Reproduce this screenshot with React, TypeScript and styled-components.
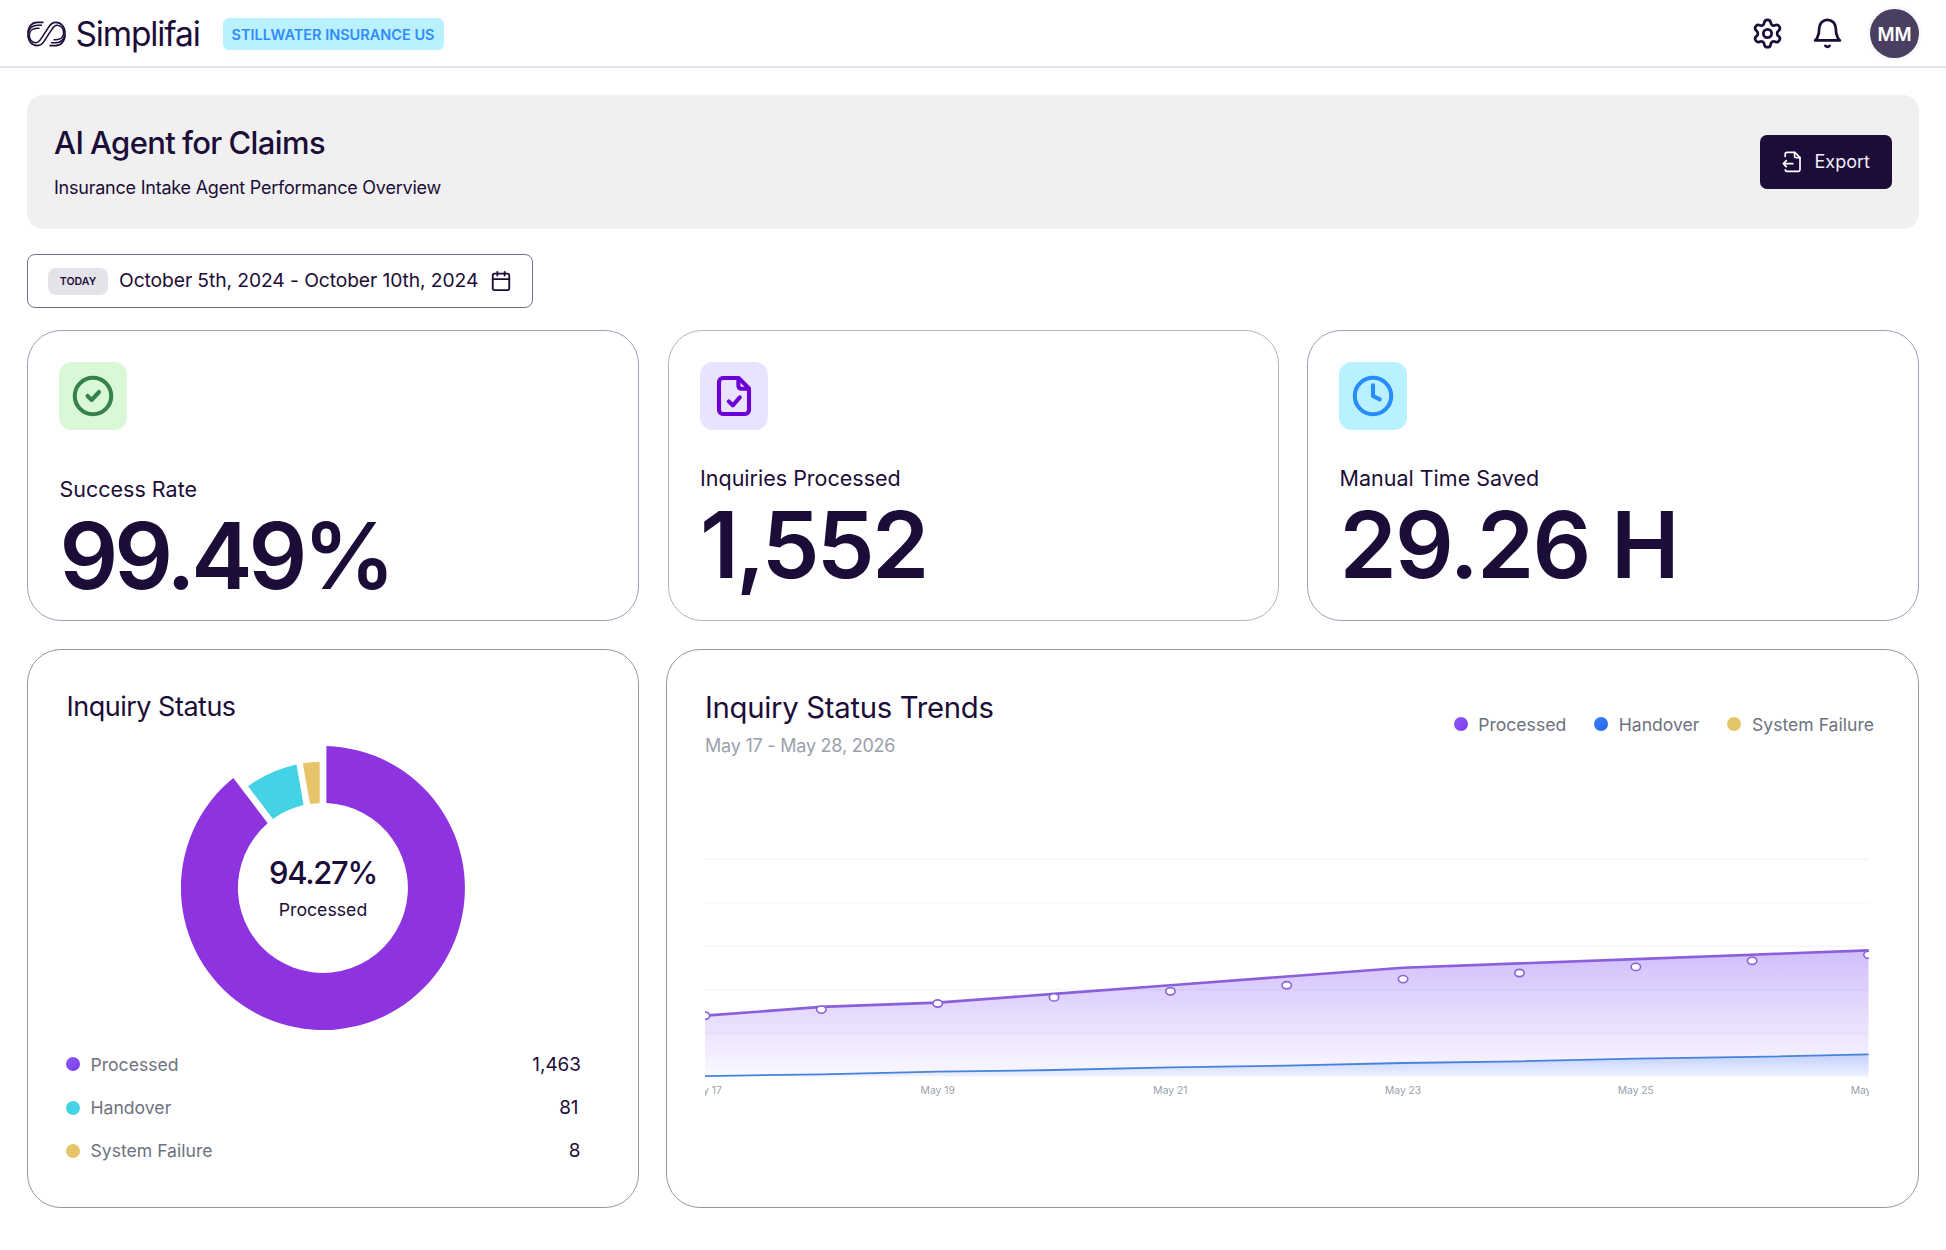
import React from "react";
import styled, { createGlobalStyle } from "styled-components";
import { Calendar, Settings } from "lucide-react";

const ink = "#1c0d38";

const GlobalStyle = createGlobalStyle`
  * { box-sizing: border-box; }
  body {
    margin: 0;
    background: #fff;
    color: ${ink};
    font-family: Inter, "Liberation Sans", sans-serif;
  }
  svg { display: block; flex: none; }
`;

const Page = styled.div`
  width: 1946px;
  height: 1250px;
  overflow: hidden;
`;

const Header = styled.header`
  height: 68px;
  border-bottom: 2px solid #e3e1ec;
  padding: 1px 27px 0;
  display: flex;
  align-items: center;
`;

const Wordmark = styled.span`
  margin-left: 9.5px;
  width: 127px;
  font-size: 33.5px;
  line-height: 40px;
  font-weight: 400;
  letter-spacing: -1.15px;
  white-space: nowrap;
`;

const Tenant = styled.span`
  margin-left: 20px;
  width: 221px;
  height: 32px;
  border-radius: 6px;
  background: #b9f1ff;
  color: #2f8cf8;
  font-size: 14.5px;
  line-height: 33px;
  font-weight: 600;
  text-align: center;
  white-space: nowrap;
`;

const HeaderActions = styled.div`
  margin-left: auto;
  display: flex;
  align-items: center;
  gap: 26.5px;
`;

const Avatar = styled.div`
  width: 49px;
  height: 49px;
  border-radius: 50%;
  background: #4a3f60;
  box-shadow: 0 0 0 3px #f9f8fb;
  color: #fff;
  font-size: 18.5px;
  line-height: 50px;
  font-weight: 600;
  text-align: center;
`;

const Main = styled.main`
  padding: 27px 27px 0;
`;

const Hero = styled.section`
  height: 134px;
  padding: 0 27px;
  border-radius: 16px;
  background: #f0f0f0;
  display: flex;
  align-items: center;
  justify-content: space-between;
`;

const Title = styled.h1`
  margin: 0;
  font-size: 31px;
  line-height: 40px;
  font-weight: 500;
  letter-spacing: -0.6px;
  word-spacing: -1px;
`;

const Subtitle = styled.p`
  margin: 12px 0 0;
  font-size: 18px;
  line-height: 26px;
  letter-spacing: -0.23px;
`;

const ExportButton = styled.button`
  width: 132px;
  height: 54px;
  padding: 0 0 0 22px;
  border: 0;
  border-radius: 7px;
  background: ${ink};
  color: #f0eef5;
  display: flex;
  align-items: center;
  gap: 12.5px;
  font: 400 18px/24px Inter, sans-serif;
`;

const DateRange = styled.div`
  margin-top: 25px;
  width: 506px;
  height: 54px;
  padding-left: 20px;
  border: 1px solid #77728a;
  border-radius: 8px;
  display: flex;
  align-items: center;
`;

const Today = styled.span`
  width: 60px;
  height: 27px;
  border-radius: 8px;
  background: #e5e3ea;
  font-size: 10.6px;
  line-height: 27px;
  font-weight: 600;
  text-align: center;
`;

const DateText = styled.span`
  margin: 0 0 0 11px;
  padding-bottom: 1.5px;
  width: 371px;
  font-size: 19.3px;
  line-height: 26px;
  letter-spacing: -0.1px;
  white-space: nowrap;
`;

const StatGrid = styled.section`
  margin-top: 22px;
  display: grid;
  grid-template-columns: 612px 611px 612px;
  justify-content: space-between;
`;

const Card = styled.article<{ $line: string }>`
  border: 1px solid ${(p) => p.$line};
  border-radius: 34px;
`;

const StatCard = styled(Card)`
  height: 291px;
  padding: 31px 31px 0;
`;

const Tile = styled.div<{ $bg: string }>`
  width: 68px;
  height: 68px;
  border-radius: 13px;
  background: ${(p) => p.$bg};
  display: flex;
  align-items: center;
  justify-content: center;
`;

const StatLabel = styled.div<{ $gap: number }>`
  margin-top: ${(p) => p.$gap}px;
  padding-left: 0.5px;
  font-size: 21.5px;
  line-height: 28px;
`;

const StatValue = styled.div<{ $track: number }>`
  margin-top: 7.5px;
  padding-left: 0.5px;
  font-size: 92px;
  line-height: 92px;
  font-weight: 600;
  letter-spacing: ${(p) => p.$track}px;
  white-space: nowrap;
`;

const ChartGrid = styled.section`
  margin-top: 28px;
  display: grid;
  grid-template-columns: 612px 1253px;
  justify-content: space-between;
`;

const StatusCard = styled(Card)`
  height: 559px;
  padding: 39px 57px 0 38.5px;
`;

const StatusTitle = styled.h2`
  margin: 0;
  font-size: 27px;
  line-height: 36px;
  font-weight: 400;
  letter-spacing: -0.5px;
`;

const DonutArea = styled.div`
  display: grid;
  width: 284px;
  height: 284px;
  margin: 21px 0 0 114.5px;
  place-items: center;
  > * { grid-area: 1 / 1; }
`;

const DonutCaption = styled.div`
  text-align: center;
  margin-top: 1px;
`;

const DonutValue = styled.div`
  font-size: 31px;
  line-height: 36px;
  font-weight: 500;
  letter-spacing: -1.3px;
`;

const DonutLabel = styled.div`
  font-size: 17.7px;
  line-height: 24px;
  margin-top: 7px;
`;

const LegendRow = styled.div`
  display: flex;
  align-items: center;
  height: 43.2px;
`;

const StatusLegend = styled.div`
  margin: 13.5px 0 0 -1px;
`;

const Dot = styled.span<{ $fill: string }>`
  width: 14px;
  height: 14px;
  margin-bottom: 1.5px;
  border-radius: 50%;
  background: ${(p) => p.$fill};
`;

const LegendName = styled.span<{ $gap: number }>`
  margin-left: ${(p) => p.$gap}px;
  color: #6e7280;
  font-size: 17.6px;
  line-height: 24px;
  white-space: nowrap;
`;

const LegendValue = styled.span<{ $inset: number }>`
  margin-left: auto;
  padding-right: ${(p) => p.$inset}px;
  font-size: 18.9px;
  line-height: 24px;
`;

const TrendCard = styled(Card)`
  height: 559px;
  padding: 38px 44px 0 38px;
`;

const TrendHeader = styled.div`
  display: flex;
  justify-content: space-between;
`;

const TrendTitle = styled.h2`
  margin: 0;
  font-size: 29.3px;
  line-height: 40px;
  font-weight: 400;
  letter-spacing: -0.3px;
`;

const TrendDates = styled.p`
  margin: 5.5px 0 0;
  color: #9ca0ab;
  font-size: 18px;
  line-height: 24px;
  letter-spacing: -0.22px;
`;

const TrendLegend = styled.div`
  display: flex;
  height: 24px;
  margin-top: 25px;
  gap: 28px;
`;

const TrendKey = styled.div`
  display: flex;
  align-items: center;
`;

const TrendPlot = styled.div`
  margin-top: 91.5px;
`;

const violetDot = "linear-gradient(135deg, #8b5cf6, #7c3aed)";

function LogoStrand() {
  return (
    <>
      <path d="M16.500 1.400H10.300C4.700 1.400.900 6 .900 13S4.700 24.600 10.300 24.600c3.200 0 5-1.600 6.700-4.200L24.700 8.600C26.400 6 27.500 4.300 30 4.300c4.300 0 6.700 3.500 6.700 7.500 0 4.500-3.400 7-8 7H26.500" />
      <path d="M15 4.200H10.500C6 4.200 2.400 7 1.200 11.500" />
    </>
  );
}

function Logo() {
  return (
    <svg width="39" height="26" viewBox="0 0 39 26" fill="none" stroke={ink} strokeWidth="1.600">
      <LogoStrand />
      <g transform="rotate(180 19.500 13)">
        <LogoStrand />
      </g>
    </svg>
  );
}

function BellIcon() {
  return (
    <svg width="33" height="33" viewBox="0 0 24 24" fill="none" stroke={ink} strokeWidth="2" strokeLinecap="round" strokeLinejoin="round">
      <path d="M18 8A6 6 0 0 0 6 8c0 7-3 9-3 9h18s-3-2-3-9" />
      <path d="M13.500 21a2 2 0 0 1-3 0" />
    </svg>
  );
}

function ExportIcon() {
  return (
    <svg width="20" height="22" viewBox="0 0 20 22" fill="none" stroke="#fff" strokeWidth="1.700" strokeLinecap="round" strokeLinejoin="round">
      <path d="M3.200 5.500V3.200a1.800 1.800 0 0 1 1.800-1.800h7.800L18 6.600v12a1.800 1.800 0 0 1-1.800 1.800H5a1.800 1.800 0 0 1-1.800-1.500" />
      <path d="M12.600 1.600v3.600a1.500 1.500 0 0 0 1.500 1.500H18" />
      <path d="M10.800 12.700H1.500M4.300 9.700l-3 3 3 3" />
    </svg>
  );
}

type GlyphProps = { color: string; paths: string[]; ring?: boolean };

function TileGlyph({ color, paths, ring }: GlyphProps) {
  return (
    <svg width="48" height="48" viewBox="0 0 24 24" fill="none" stroke={color} strokeWidth="2.050" strokeLinecap="round" strokeLinejoin="round">
      {ring && <circle cx="12" cy="12" r="9.100" />}
      {paths.map((d) => <path key={d} d={d} />)}
    </svg>
  );
}

const stats = [
  {
    label: "Success Rate", value: "99.49%", gap: 44.5, track: -4.2, line: "#a59dbb", tile: "#daf8d8",
    glyph: { color: "#35834a", ring: true, paths: ["M9.300 12l2 2 3.700-4"] },
  },
  {
    label: "Inquiries Processed", value: "1,552", gap: 33.8, track: -2.8, line: "#b4b3bc", tile: "#e9e3ff",
    glyph: {
      color: "#6c00d4",
      paths: [
        "M14.300 3H6.500a2 2 0 0 0-2 2v14a2 2 0 0 0 2 2h11a2 2 0 0 0 2-2V8.200Z",
        "M14.200 3.300V7a1.400 1.400 0 0 0 1.400 1.400h3.700",
        "M9.400 14.700l2 2 3.500-4",
      ],
    },
  },
  {
    label: "Manual Time Saved", value: "29.26 H", gap: 33.8, track: -1.8, line: "#a59dbb", tile: "#b9f1ff",
    glyph: { color: "#288cfa", ring: true, paths: ["M12 6.600V12l3.400 1.700"] },
  },
];

const statuses = [
  { name: "Processed", value: "1,463", inset: 0, fill: violetDot },
  { name: "Handover", value: "81", inset: 2.5, fill: "#44d3e5" },
  { name: "System Failure", value: "8", inset: 0.5, fill: "#e6c469" },
];

const trendKeys = [
  { name: "Processed", fill: violetDot },
  { name: "Handover", fill: "linear-gradient(135deg, #3b82f6, #2563eb)" },
  { name: "System Failure", fill: "#e6c469" },
];

function Donut() {
  return (
    <svg width="284" height="284" viewBox="-142 -142 284 284">
      <path fill="#8d33e0" d="M3.400-141.900A142 142 0 1 1-89.700-110.100L-55.300-64.700A85 85 0 1 0 3.400-85Z" />
      <path fill="#44d3e5" d="M-74.900-101.800A126.300 126.300 0 0 1-26.500-123.500L-19.400-82.900A85.200 85.200 0 0 0-50.100-69Z" />
      <path fill="#e6c469" d="M-20.200-124.700A126.300 126.300 0 0 1-3.300-126.300V-84.800A85 85 0 0 0-13-84Z" />
    </svg>
  );
}

const processed = [14, 16, 17, 19, 21, 23, 25, 26, 27, 28, 29];
const handover = [0.1, 0.5, 1.1, 1.5, 2.1, 2.5, 3.1, 3.5, 4.1, 4.5, 5.1];
const plotWidth = 1163.5;
const base = 227.5;
const stepX = plotWidth / 10;
const toPoints = (values: number[]) =>
  values.map((v, i) => `${(i * stepX).toFixed(1)},${(base - v * 4.35).toFixed(1)}`).join(" ");

function TrendChart() {
  const upper = toPoints(processed);
  const lower = toPoints(handover);
  return (
    <svg width={plotWidth} height="260" viewBox={`0 0 ${plotWidth} 260`} overflow="hidden">
      <defs>
        <linearGradient id="violetArea" x1="0" y1="0" x2="0" y2="1">
          <stop offset="0" stopColor="#8b5cf6" stopOpacity="0.4" />
          <stop offset="1" stopColor="#8b5cf6" stopOpacity="0.04" />
        </linearGradient>
        <linearGradient id="blueArea" x1="0" y1="0" x2="0" y2="1">
          <stop offset="0" stopColor="#3b82f6" stopOpacity="0.27" />
          <stop offset="1" stopColor="#3b82f6" stopOpacity="0.06" />
        </linearGradient>
      </defs>
      {[0, 1, 2, 3, 4].map((i) => (
        <line key={i} x1="0" x2={plotWidth} y1={10.3 + i * 43.45} y2={10.3 + i * 43.45} stroke="#f4f4f6" strokeWidth="1.200" />
      ))}
      <polygon points={`0,${base} ${upper} ${plotWidth},${base}`} fill="url(#violetArea)" />
      <polygon points={`0,${base} ${lower} ${plotWidth},${base}`} fill="url(#blueArea)" />
      <polyline points={upper} fill="none" stroke="#8a5fdc" strokeWidth="2.600" />
      <polyline points={lower} fill="none" stroke="#4583dc" strokeWidth="1.800" />
      {processed.map((_, i) => (
        <ellipse key={i} cx={i * stepX} cy={166.7 - i * 6.1} rx="4.700" ry="3.600" fill="#fff" stroke="#8a5fdc" strokeWidth="1.600" />
      ))}
      {[17, 19, 21, 23, 25, 27].map((day, i) => (
        <text key={day} x={i * 2 * stepX} y="244.500" textAnchor="middle" fontSize="10.300" fill="#9a9fab">
          May {day}
        </text>
      ))}
    </svg>
  );
}

export default function App() {
  return (
    <Page>
      <GlobalStyle />
      <Header>
        <Logo />
        <Wordmark>Simplifai</Wordmark>
        <Tenant>STILLWATER INSURANCE US</Tenant>
        <HeaderActions>
          <Settings size={33} color={ink} strokeWidth={2} />
          <BellIcon />
          <Avatar>MM</Avatar>
        </HeaderActions>
      </Header>
      <Main>
        <Hero>
          <div>
            <Title>AI Agent for Claims</Title>
            <Subtitle>Insurance Intake Agent Performance Overview</Subtitle>
          </div>
          <ExportButton>
            <ExportIcon />
            Export
          </ExportButton>
        </Hero>
        <DateRange>
          <Today>TODAY</Today>
          <DateText>October 5th, 2024 - October 10th, 2024</DateText>
          <Calendar size={22} color={ink} strokeWidth={2} />
        </DateRange>
        <StatGrid>
          {stats.map((s) => (
            <StatCard key={s.label} $line={s.line}>
              <Tile $bg={s.tile}><TileGlyph {...s.glyph} /></Tile>
              <StatLabel $gap={s.gap}>{s.label}</StatLabel>
              <StatValue $track={s.track}>{s.value}</StatValue>
            </StatCard>
          ))}
        </StatGrid>
        <ChartGrid>
          <StatusCard $line="#9896a3">
            <StatusTitle>Inquiry Status</StatusTitle>
            <DonutArea>
              <Donut />
              <DonutCaption>
                <DonutValue>94.27%</DonutValue>
                <DonutLabel>Processed</DonutLabel>
              </DonutCaption>
            </DonutArea>
            <StatusLegend>
              {statuses.map((s) => (
                <LegendRow key={s.name}>
                  <Dot $fill={s.fill} />
                  <LegendName $gap={11}>{s.name}</LegendName>
                  <LegendValue $inset={s.inset}>{s.value}</LegendValue>
                </LegendRow>
              ))}
            </StatusLegend>
          </StatusCard>
          <TrendCard $line="#9896a3">
            <TrendHeader>
              <div>
                <TrendTitle>Inquiry Status Trends</TrendTitle>
                <TrendDates>May 17 - May 28, 2026</TrendDates>
              </div>
              <TrendLegend>
                {trendKeys.map((k) => (
                  <TrendKey key={k.name}>
                    <Dot $fill={k.fill} />
                    <LegendName $gap={10.5}>{k.name}</LegendName>
                  </TrendKey>
                ))}
              </TrendLegend>
            </TrendHeader>
            <TrendPlot>
              <TrendChart />
            </TrendPlot>
          </TrendCard>
        </ChartGrid>
      </Main>
    </Page>
  );
}
